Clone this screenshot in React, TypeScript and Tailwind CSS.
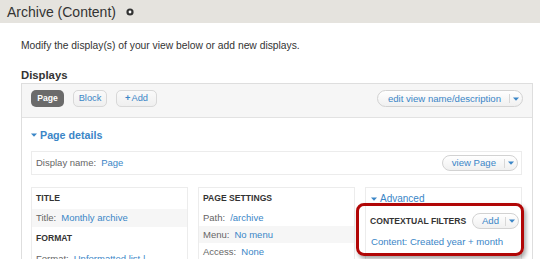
import React from "react";

function Caret({ className = "" }: { className?: string }) {
  return (
    <svg width="6" height="4" viewBox="0 0 6 4" className={className}>
      <path d="M0 0.5h6L3 3.8z" fill="#3b86c7" />
    </svg>
  );
}

function SplitButton({ label, h = "h-[17px]", textPad = "pl-[10px] pr-[8px]" }: { label: string; h?: string; textPad?: string }) {
  return (
    <div className={`flex items-center ${h} rounded-full border border-[#d2d2d2] bg-linear-to-b from-white to-[#f0f0f0] text-[9.6px] leading-none`}>
      <span className={`${textPad} text-[#3b86c7]`}>{label}</span>
      <span className="h-[9px] w-px bg-[#d8d8d8]" />
      <span className="w-[12px] flex items-center justify-center">
        <Caret />
      </span>
    </div>
  );
}

function Row({ label, value, gray = false, h = "h-[17px]" }: { label: string; value: string; gray?: boolean; h?: string }) {
  return (
    <div className={`${h} flex items-center px-[4px] text-[9.5px] leading-none whitespace-nowrap ${gray ? "bg-[#f6f6f6]" : ""}`}>
      <span className="text-[#666]">{label}</span>
      <span className="ml-[5px] text-[#3b86c7]">{value}</span>
    </div>
  );
}

function Header({ text, h = "h-[21px]" }: { text: string; h?: string }) {
  return (
    <div className={`${h} flex items-center px-[4px] text-[8.6px] font-bold leading-none text-[#333] uppercase whitespace-nowrap`}>
      {text}
    </div>
  );
}

export default function App() {
  return (
    <div className="w-[540px] h-[259px] overflow-hidden bg-white text-[#333] font-['Liberation_Sans',Arial,sans-serif]">
      <div className="h-[23px] bg-[#e5e3de] flex items-center pl-[7px]">
        <span className="text-[14px] leading-none text-[#333]">Archive (Content)</span>
        <svg width="8" height="8" viewBox="0 0 8 8" className="ml-[10px] mt-[1px]">
          <circle cx="4" cy="4" r="3.6" fill="#333" />
          <circle cx="4" cy="4" r="1.4" fill="#fff" />
        </svg>
      </div>

      <div className="pl-[21px] pr-[7px]">
        <p className="mt-[16px] text-[10.3px] leading-[14px] text-[#333]">
          Modify the display(s) of your view below or add new displays.
        </p>
        <h2 className="mt-[15px] text-[11.3px] font-bold leading-[14px] text-[#333]">Displays</h2>

        <div className="mt-[1px] border border-[#dedede] h-[200px]">
          <div className="h-[34px] bg-[#f6f6f6] border-b border-[#e2e2e2] flex items-start justify-between pt-[6px] pl-[9px] pr-[9px]">
            <div className="flex gap-[9px]">
              <div className="h-[17px] w-[33px] rounded-[5px] bg-[#6b6b6b] flex items-center justify-center text-white font-bold text-[8.6px] leading-none">
                Page
              </div>
              <div className="h-[17px] w-[34px] rounded-[5px] border border-[#d8d8d8] bg-linear-to-b from-[#fafafa] to-[#efefef] flex items-center justify-center text-[#3b86c7] text-[9.3px] leading-none">
                Block
              </div>
              <div className="h-[17px] w-[41px] rounded-[5px] border border-[#d8d8d8] bg-linear-to-b from-[#fafafa] to-[#efefef] flex items-center justify-center text-[#3b86c7] text-[9.3px] leading-none">
                <span className="font-bold mr-[1px]">+</span>Add
              </div>
            </div>
            <SplitButton label="edit view name/description" />
          </div>

          <div className="pl-[9px] pr-[10px] pt-[10px] bg-white">
            <div className="h-[14px] flex items-center text-[10.7px] font-bold leading-none text-[#3b86c7]">
              <Caret className="mr-[3px]" />
              Page details
            </div>

            <div className="mt-[9px] h-[24px] border border-[#ececec] flex items-center justify-between pl-[4px] pr-[3px]">
              <div className="text-[9.5px] leading-none whitespace-nowrap">
                <span className="text-[#666]">Display name:</span>
                <span className="ml-[5px] text-[#3b86c7]">Page</span>
              </div>
              <SplitButton label="view Page" h="h-[16px]" textPad="pl-[9px] pr-[8px]" />
            </div>

            <div className="mt-[12px] grid grid-cols-3 gap-[10px] items-start">
              <div className="border border-[#ececec] h-[90px]">
                <Header text="Title" />
                <Row label="Title:" value="Monthly archive" gray h="h-[18px]" />
                <Header text="Format" h="h-[23px]" />
                <Row label="Format:" value="Unformatted list  |" h="h-[18px]" />
              </div>

              <div className="border border-[#ececec] h-[90px]">
                <Header text="Page settings" />
                <Row label="Path:" value="/archive" />
                <Row label="Menu:" value="No menu" gray />
                <Row label="Access:" value="None" />
              </div>

              <div className="border border-[#ececec] h-[90px]">
                <div className="h-[21px] flex items-center px-[5px] text-[10px] leading-none text-[#3b86c7]">
                  <Caret className="mr-[3px]" />
                  Advanced
                </div>
                <div className="relative bg-white">
                  <div className="h-[24px] flex items-center justify-between pl-[4px] pr-[2px]">
                    <span className="text-[8.6px] font-bold leading-none text-[#333] whitespace-nowrap">CONTEXTUAL FILTERS</span>
                    <SplitButton label="Add" h="h-[16px]" textPad="pl-[9px] pr-[6px]" />
                  </div>
                  <div className="h-[18px] flex items-center px-[5px] text-[9.6px] leading-none text-[#3b86c7] whitespace-nowrap">
                    Content: Created year + month
                  </div>
                  <div className="absolute left-[-10px] right-[-3px] top-[-6px] bottom-[-5px] rounded-[8px] border-[3px] border-[#b10606] shadow-[2px_3px_4px_rgba(0,0,0,0.35)] pointer-events-none" />
                </div>
                <div className="pt-[6px] h-[30px] flex items-center justify-between pl-[4px] pr-[2px]">
                  <span className="text-[8.6px] font-bold leading-none text-[#333] whitespace-nowrap">RELATIONSHIPS</span>
                  <SplitButton label="Add" h="h-[16px]" textPad="pl-[9px] pr-[6px]" />
                </div>
              </div>
            </div>
          </div>
        </div>
      </div>
    </div>
  );
}
